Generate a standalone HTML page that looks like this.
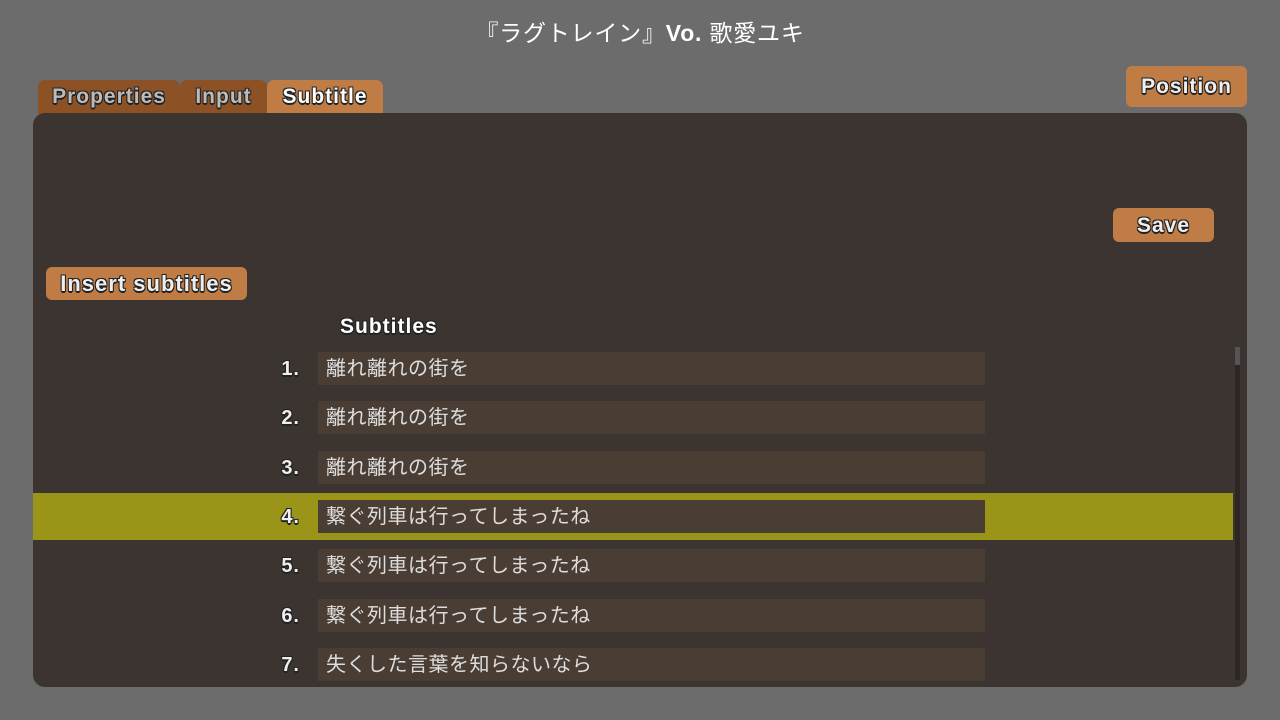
<!DOCTYPE html><html><head><meta charset="utf-8"><style>
body{margin:0;width:1280px;height:720px;background:#6c6c6c;position:relative;overflow:hidden;font-family:"Liberation Sans","Noto Sans CJK JP",sans-serif}
.a{position:absolute}
.o{font-weight:bold;color:#eee;letter-spacing:1px;text-shadow:-1px -1px 0 #222,1px -1px 0 #222,-1px 1px 0 #222,1px 1px 0 #222,0 2px 0 #222}
.btn{background:#c07c45;border-radius:6px;text-align:center;font-size:21px}
.tab{top:80px;height:34px;border-radius:7px 7px 0 0;font-size:21px;text-align:center;line-height:34px;color:#bbb}
.in{left:318px;width:667px;height:33px;background:#4a3d34;color:#ddd;font-size:20px;line-height:35px;padding-left:8px;box-sizing:border-box;letter-spacing:0.5px}
.n{left:262px;width:38px;text-align:right;font-size:20px;line-height:35px}
</style></head><body>
<div class="a" style="left:0;width:1280px;top:14px;text-align:center;color:#fff;font-size:23px;letter-spacing:0.8px">『ラグトレイン』<b>Vo.</b> 歌愛ユキ</div>
<div class="a tab o" style="left:38px;width:142px;background:#8c5226;color:#bbb">Properties</div>
<div class="a tab o" style="left:180px;width:87px;background:#8c5226;color:#bbb">Input</div>
<div class="a tab o" style="left:267px;width:116px;background:#c07c45;color:#fff">Subtitle</div>
<div class="a btn o" style="left:1126px;top:66px;width:121px;height:41px;line-height:41px">Position</div>
<div class="a" style="left:33px;top:113px;width:1214px;height:574px;background:#3c3430;border-radius:12px"></div>
<div class="a btn o" style="left:1113px;top:208px;width:101px;height:34px;line-height:35px">Save</div>
<div class="a btn o" style="left:46px;top:267px;width:201px;height:33px;line-height:34px;font-size:22px">Insert subtitles</div>
<div class="a o" style="left:340px;top:315px;font-size:21px;color:#fff">Subtitles</div>
<div class="a" style="left:33px;top:493px;width:1200px;height:47px;background:#9a9418"></div>
<div class="a" style="left:1235px;top:347px;width:5px;height:333px;background:#2c2624"></div>
<div class="a" style="left:1235px;top:347px;width:5px;height:18px;background:#555"></div>
<div class="a n o" style="top:352px">1.</div><div class="a in" style="top:352px">離れ離れの街を</div>
<div class="a n o" style="top:401px">2.</div><div class="a in" style="top:401px">離れ離れの街を</div>
<div class="a n o" style="top:451px">3.</div><div class="a in" style="top:451px">離れ離れの街を</div>
<div class="a n o" style="top:500px">4.</div><div class="a in" style="top:500px">繋ぐ列車は行ってしまったね</div>
<div class="a n o" style="top:549px">5.</div><div class="a in" style="top:549px">繋ぐ列車は行ってしまったね</div>
<div class="a n o" style="top:599px">6.</div><div class="a in" style="top:599px">繋ぐ列車は行ってしまったね</div>
<div class="a n o" style="top:648px">7.</div><div class="a in" style="top:648px">失くした言葉を知らないなら</div>
</body></html>
